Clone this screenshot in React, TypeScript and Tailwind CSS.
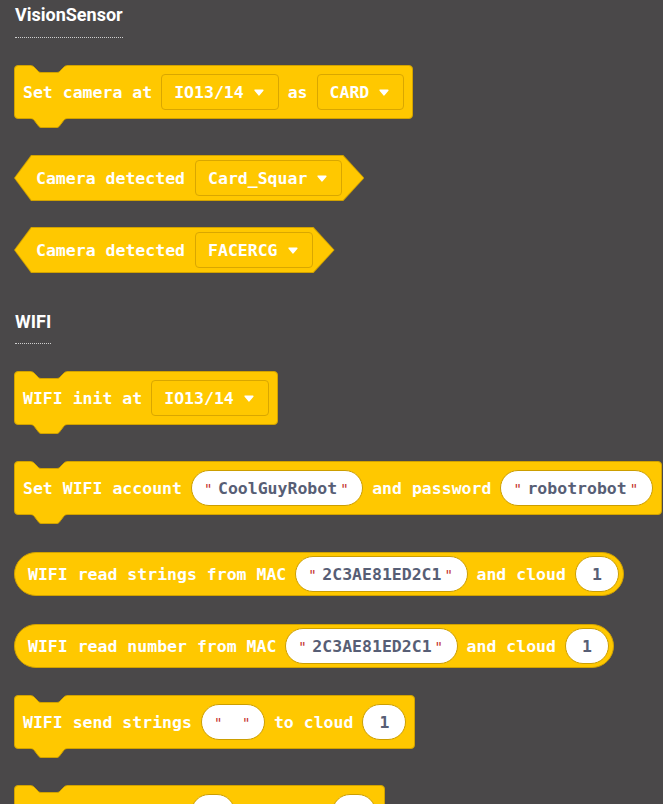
import type { ReactNode } from "react";

const BG = "#4a4849";

function Caret() {
  return (
    <svg width="10" height="7" viewBox="0 0 10 7" className="shrink-0">
      <path d="M1.2 1.2h7.6L5 5.8z" fill="#fff" stroke="#fff" strokeWidth="1.6" strokeLinejoin="round" />
    </svg>
  );
}

function T({ children }: { children: ReactNode }) {
  return <span className="pt-[2px]">{children}</span>;
}

function Field({ children }: { children: ReactNode }) {
  return (
    <div className="flex h-[36px] items-center gap-[10px] rounded-[4px] border border-[#d9a700] pl-[12px] pr-[14px]">
      <T>{children}</T>
      <Caret />
    </div>
  );
}

function Quote() {
  return <span className="w-[8px] pt-[2px] text-center text-[14px] font-normal text-[#c4302b]">"</span>;
}

function Str({ children }: { children?: ReactNode }) {
  return (
    <div className="flex h-[36px] items-center rounded-full border border-[#cc9e00] bg-white pl-[12px] pr-[14px] text-[#575e75]">
      <Quote />
      {children ? <span className="ml-[6px] mr-[3px] pt-[2px]">{children}</span> : <span className="w-[20px]" />}
      <Quote />
    </div>
  );
}

function Num({ children }: { children: ReactNode }) {
  return (
    <div className="flex h-[36px] items-center rounded-full border border-[#cc9e00] bg-white px-[16px] text-[#575e75]">
      <T>{children}</T>
    </div>
  );
}

function Statement({ className = "", children }: { className?: string; children: ReactNode }) {
  return (
    <div
      className={`relative flex h-[54px] w-fit items-center gap-[9px] rounded-[4px] border border-[#d1a200] bg-[#ffc800] px-[8px] ${className}`}
    >
      {/* notch on top */}
      <svg className="absolute left-[15px] top-[-1px]" width="38" height="9" viewBox="0 0 38 9">
        <path
          d="M-1 0H39V0.5C36 0.5 35 1 34 2L31 5C30 6 29 7.5 27 7.5H11C9 7.5 8 6 7 5L4 2C3 1 2 0.5 -1 0.5Z"
          fill={BG}
        />
        <path
          d="M0 0.5C2 0.5 3 1 4 2L7 5C8 6 9 7.5 11 7.5H27C29 7.5 30 6 31 5L34 2C35 1 36 0.5 38 0.5"
          fill="none"
          stroke="#d1a200"
        />
      </svg>
      {/* tab below */}
      <svg className="absolute left-[15px] top-full" width="38" height="11" viewBox="0 0 38 11">
        <path
          d="M-1 0H39V0.5C36 0.5 35 1 34 2L31 6C30 7 29 9.5 27 9.5H11C9 9.5 8 7 7 6L4 2C3 1 2 0.5 -1 0.5Z"
          fill="#ffc800"
        />
        <path
          d="M0 0.5C2 0.5 3 1 4 2L7 6C8 7 9 9.5 11 9.5H27C29 9.5 30 7 31 6L34 2C35 1 36 0.5 38 0.5"
          fill="none"
          stroke="#d1a200"
        />
      </svg>
      {children}
    </div>
  );
}

function Bool({ className = "", children }: { className?: string; children: ReactNode }) {
  return (
    <div className={`relative flex h-[46px] w-fit items-center gap-[10px] px-[22px] ${className}`}>
      <div className="absolute inset-0 bg-[#d1a200] [clip-path:polygon(17px_0,calc(100%_-_21px)_0,100%_50%,calc(100%_-_21px)_100%,17px_100%,0_50%)]" />
      <div className="absolute inset-[1px] bg-[#ffc800] [clip-path:polygon(16.5px_0,calc(100%_-_20.5px)_0,100%_50%,calc(100%_-_20.5px)_100%,16.5px_100%,0_50%)]" />
      <div className="relative flex items-center gap-[10px]">{children}</div>
    </div>
  );
}

function Reporter({ className = "", children }: { className?: string; children: ReactNode }) {
  return (
    <div
      className={`flex h-[44px] w-fit items-center gap-[9px] rounded-full border border-[#d1a200] bg-[#ffc800] pl-[13px] pr-[4px] ${className}`}
    >
      {children}
    </div>
  );
}

function Heading({ className = "", line, children }: { className?: string; line: string; children: ReactNode }) {
  return (
    <div className={`ml-[1px] flex w-fit flex-col ${className}`}>
      <div className="h-[24px] font-['Roboto',sans-serif] text-[18px] font-bold leading-[24px] text-white">
        {children}
      </div>
      <div className={`border-t border-dotted border-[#cfcfcf] ${line}`} />
    </div>
  );
}

export default function App() {
  return (
    <div className="h-[804px] overflow-hidden bg-[#4a4849] pl-[14px] pt-[3px] font-['DejaVu_Sans_Mono',monospace] text-[16.5px] font-bold leading-none text-white">
      <Heading line="mt-[10px]">VisionSensor</Heading>

      <Statement className="mt-[27px]">
        <T>Set camera at</T>
        <Field>IO13/14</Field>
        <T>as</T>
        <Field>CARD</Field>
      </Statement>

      <Bool className="mt-[36px]">
        <T>Camera detected</T>
        <Field>Card_Squar</Field>
      </Bool>

      <Bool className="mt-[26px]">
        <T>Camera detected</T>
        <Field>FACERCG</Field>
      </Bool>

      <Heading className="mt-[37px]" line="mt-[9px]">
        WIFI
      </Heading>

      <Statement className="mt-[27px]">
        <T>WIFI init at</T>
        <Field>IO13/14</Field>
      </Statement>

      <Statement className="mt-[36px]">
        <T>Set WIFI account</T>
        <Str>CoolGuyRobot</Str>
        <T>and password</T>
        <Str>robotrobot</Str>
      </Statement>

      <Reporter className="mt-[37px]">
        <T>WIFI read strings from MAC</T>
        <Str>2C3AE81ED2C1</Str>
        <T>and cloud</T>
        <Num>1</Num>
      </Reporter>

      <Reporter className="mt-[28px]">
        <T>WIFI read number from MAC</T>
        <Str>2C3AE81ED2C1</Str>
        <T>and cloud</T>
        <Num>1</Num>
      </Reporter>

      <Statement className="mt-[27px]">
        <T>WIFI send strings</T>
        <Str />
        <T>to cloud</T>
        <Num>1</Num>
      </Statement>

      <Statement className="mt-[36px]">
        <T>WIFI send number</T>
        <Num>0</Num>
        <T>to cloud</T>
        <Num>1</Num>
      </Statement>
    </div>
  );
}
